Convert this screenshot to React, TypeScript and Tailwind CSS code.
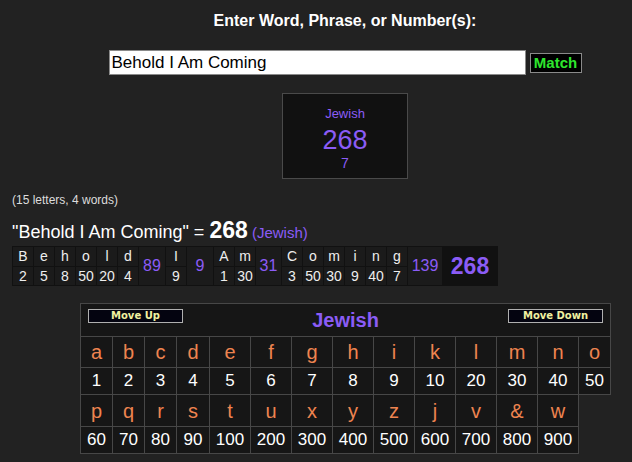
import React from "react";

const row1: [string, number][] = [
  ["a", 1], ["b", 2], ["c", 3], ["d", 4], ["e", 5], ["f", 6], ["g", 7],
  ["h", 8], ["i", 9], ["k", 10], ["l", 20], ["m", 30], ["n", 40], ["o", 50],
];
const row2: [string, number][] = [
  ["p", 60], ["q", 70], ["r", 80], ["s", 90], ["t", 100], ["u", 200], ["x", 300],
  ["y", 400], ["z", 500], ["j", 600], ["v", 700], ["&", 800], ["w", 900],
];
const colW = [
  "w-[32px]", "w-[32px]", "w-[32px]", "w-[33px]", "w-[41px]", "w-[41px]", "w-[41px]",
  "w-[41px]", "w-[41px]", "w-[41px]", "w-[41px]", "w-[41px]", "w-[41px]", "w-[32px]",
];

const words: { letters: [string, number][]; sum: number; w: string }[] = [
  { letters: [["B", 2], ["e", 5], ["h", 8], ["o", 50], ["l", 20], ["d", 4]], sum: 89, w: "w-[26px]" },
  { letters: [["I", 9]], sum: 9, w: "w-[26px]" },
  { letters: [["A", 1], ["m", 30]], sum: 31, w: "w-[25px]" },
  { letters: [["C", 3], ["o", 50], ["m", 30], ["i", 9], ["n", 40], ["g", 7]], sum: 139, w: "w-[34px]" },
];

export default function App() {
  return (
    <div className="min-h-[462px] w-full bg-[#222222] text-white font-['Liberation_Sans',Arial,sans-serif]">
      <div className="flex flex-col items-center pl-[58px] pt-[12px]">
        <div className="text-[16px] font-bold leading-[18px]">Enter Word, Phrase, or Number(s):</div>
        <div className="mt-[20px] flex items-center gap-[4px]">
          <div className="h-[25px] w-[417px] border border-[#8a8a8a] bg-white pl-[2px] text-[17px] leading-[23px] text-black">
            Behold I Am Coming
          </div>
          <div className="flex h-[20px] w-[52px] items-center justify-center border border-[#8a8a8a] bg-black text-[15px] font-bold leading-[18px] text-[#2ee62e]">
            Match
          </div>
        </div>
        <div className="mt-[18px] flex h-[86px] w-[126px] flex-col items-center border border-[#4a4a4a] bg-[#111111] pt-[12px] text-[#8b5cf6]">
          <div className="text-[13px] leading-[15px]">Jewish</div>
          <div className="mt-[4px] text-[27px] leading-[30px]">268</div>
          <div className="text-[14px] leading-[16px]">7</div>
        </div>
      </div>

      <div className="mt-[14px] pl-[12px] text-[12px] leading-[14px] text-[#dddddd]">(15 letters, 4 words)</div>

      <div className="mt-[12px] flex items-baseline pl-[12px] leading-[22px]">
        <span className="text-[18px]">"Behold I Am Coming" =&nbsp;</span>
        <span className="text-[23px] font-bold">268</span>
        <span className="text-[15px] text-[#8b5cf6]">&nbsp;(Jewish)</span>
      </div>

      <div className="ml-[12px] mt-[1px] inline-flex gap-[1px] bg-[#111111] p-[1px]">
        {words.map((wd, i) => (
          <React.Fragment key={i}>
            {wd.letters.map(([ch, v], j) => (
              <div key={j} className="flex w-[20px] flex-col gap-[1px]">
                <div className="h-[19px] bg-[#1b1b1b] text-center text-[14px] leading-[19px] text-[#eeeeee]">{ch}</div>
                <div className="h-[18px] bg-[#1b1b1b] text-center text-[14px] leading-[18px] text-[#eeeeee]">{v}</div>
              </div>
            ))}
            <div className={`${wd.w} flex items-center justify-center bg-[#1b1b1b] text-[16px] text-[#8b5cf6]`}>
              {wd.sum}
            </div>
          </React.Fragment>
        ))}
        <div className="flex w-[54px] items-center justify-center bg-[#111111] text-[23px] font-bold text-[#8b5cf6]">268</div>
      </div>

      <div className="mt-[17px] flex pl-[80px]">
        <table className="w-[530px] table-fixed border-collapse">
          <colgroup>
            {colW.map((c, i) => (
              <col key={i} className={c} />
            ))}
          </colgroup>
          <tbody>
            <tr>
              <td colSpan={14} className="h-[33px] border border-[#474747] bg-[#161616] px-[7px] pt-[4px] align-top">
                <div className="flex items-start justify-between">
                  <div className="mt-[1px] flex h-[14px] w-[95px] items-center justify-center border border-[#b0b0b0] bg-[#040410] font-['DejaVu_Sans',Verdana,sans-serif] text-[10px] font-bold leading-[12px] text-[#f0f0a0]">
                    Move Up
                  </div>
                  <div className="text-[20px] font-bold leading-[24px] text-[#8b5cf6]">Jewish</div>
                  <div className="mt-[1px] flex h-[14px] w-[95px] items-center justify-center border border-[#b0b0b0] bg-[#040410] font-['DejaVu_Sans',Verdana,sans-serif] text-[10px] font-bold leading-[12px] text-[#f0f0a0]">
                    Move Down
                  </div>
                </div>
              </td>
            </tr>
            <tr>
              {row1.map(([ch], i) => (
                <td key={i} className="h-[31px] border border-[#474747] bg-[#161616] p-0 text-center text-[20px] text-[#ee8450]">{ch}</td>
              ))}
            </tr>
            <tr>
              {row1.map(([, v], i) => (
                <td key={i} className="h-[27px] border border-[#474747] bg-[#161616] p-0 text-center text-[17px] text-white">{v}</td>
              ))}
            </tr>
            <tr>
              {row2.map(([ch], i) => (
                <td key={i} className="h-[32px] border border-[#474747] bg-[#161616] p-0 text-center text-[20px] text-[#ee8450]">{ch}</td>
              ))}
            </tr>
            <tr>
              {row2.map(([, v], i) => (
                <td key={i} className="h-[27px] border border-[#474747] bg-[#161616] p-0 text-center text-[17px] text-white">{v}</td>
              ))}
            </tr>
          </tbody>
        </table>
      </div>
    </div>
  );
}
